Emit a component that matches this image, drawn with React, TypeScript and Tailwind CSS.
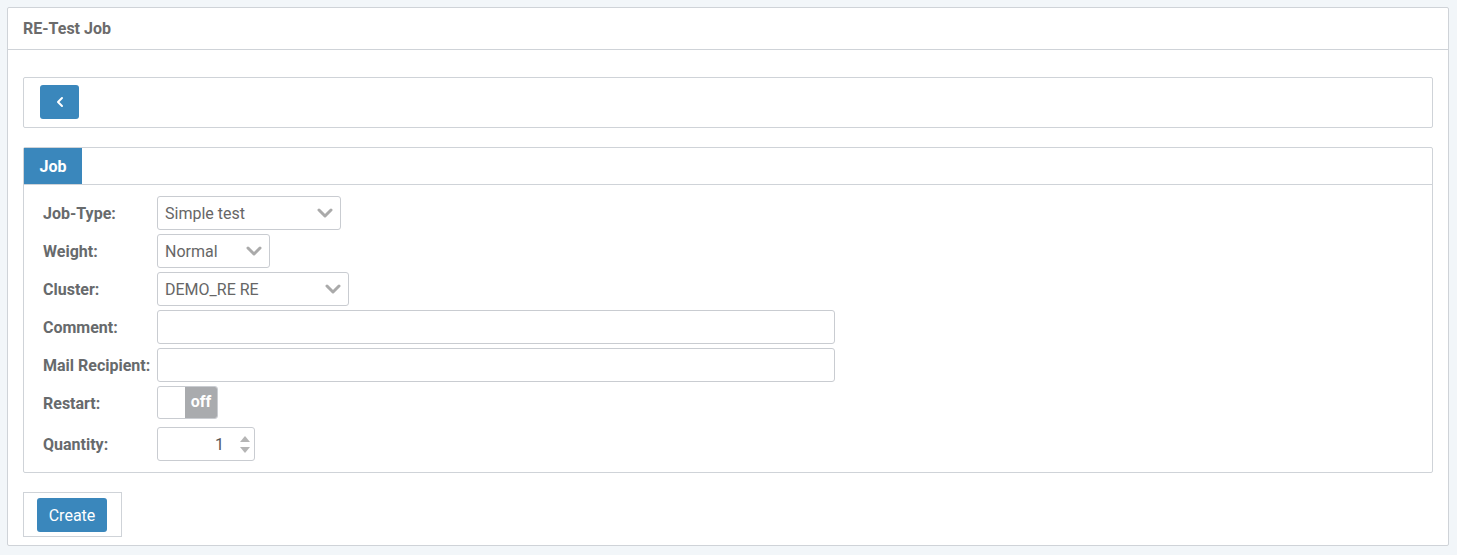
const labelCls = 'w-[114px] shrink-0 whitespace-nowrap pt-[2px] text-[16px] font-bold text-[#676a6c]'

const Chevron = () => (
  <svg width="16" height="10" viewBox="0 0 16 10" className="shrink-0">
    <polyline points="2,2 8,8 14,2" fill="none" stroke="#aaaaaa" strokeWidth="3" strokeLinecap="round" strokeLinejoin="round" />
  </svg>
)

const Select = ({ value, width }: { value: string; width: string }) => (
  <div
    className={`${width} flex h-[34px] items-center justify-between rounded-[3px] border border-[#c9ccd1] bg-white pl-[7px] pr-[7px] text-[16px] text-[#666]`}
  >
    <span className="pt-[2px]">{value}</span>
    <Chevron />
  </div>
)

const rows = [
  { label: 'Job-Type:', field: <Select value="Simple test" width="w-[184px]" /> },
  { label: 'Weight:', field: <Select value="Normal" width="w-[113px]" /> },
  { label: 'Cluster:', field: <Select value="DEMO_RE RE" width="w-[192px]" /> },
  { label: 'Comment:', field: <div className="h-[34px] w-[678px] rounded-[3px] border border-[#c9ccd1] bg-white" /> },
  { label: 'Mail Recipient:', field: <div className="h-[34px] w-[678px] rounded-[3px] border border-[#c9ccd1] bg-white" /> },
]

const App = () => {
  return (
    <div
      className="min-h-screen bg-[#f2f6f9] pl-[7px] pr-[8px] pt-[7px] pb-[8px]"
      style={{ fontFamily: 'Roboto, "Liberation Sans", sans-serif' }}
    >
      <div className="rounded-[2px] border border-[#cfd3d8] bg-white">
        {/* header */}
        <div className="flex h-[42px] items-center border-b border-[#cfd3d8] px-[15px] text-[16px] font-bold text-[#6b6b6b]">
          RE-Test Job
        </div>

        <div className="px-[15px] pt-[27px] pb-[8px]">
          {/* back bar */}
          <div className="rounded-[2px] border border-[#cfd3d8] px-[16px] pt-[7px] pb-[8px]">
            <button
              type="button"
              className="flex h-[34px] w-[39px] items-center justify-center rounded-[3px] bg-[#3a87bc]"
            >
              <svg width="8" height="12" viewBox="0 0 8 12">
                <polyline points="6,2 2,6 6,10" fill="none" stroke="white" strokeWidth="2" strokeLinecap="round" strokeLinejoin="round" />
              </svg>
            </button>
          </div>

          {/* job panel */}
          <div className="mt-[19px] rounded-[2px] border border-[#cfd3d8]">
            <div className="flex border-b border-[#cfd3d8]">
              <div className="flex h-[36px] w-[58px] items-center justify-center bg-[#3a87bc] pt-[1px] text-[16px] font-bold text-white">
                Job
              </div>
            </div>
            <div className="flex flex-col gap-[4px] pt-[11px] pb-[11px] pl-[19px]">
              {rows.map(({ label, field }) => (
                <div key={label} className="flex items-center">
                  <span className={labelCls}>{label}</span>
                  {field}
                </div>
              ))}
              <div className="flex items-center">
                <span className={labelCls}>Restart:</span>
                <div className="flex h-[33px] w-[61px] overflow-hidden rounded-[3px] border border-[#c9ccd1] bg-white">
                  <div className="w-[27px]" />
                  <div className="flex flex-1 items-center justify-center bg-[#a9abae] pb-[2px] text-[16px] font-bold text-white">
                    off
                  </div>
                </div>
              </div>
              <div className="mt-[4px] flex items-center">
                <span className={labelCls}>Quantity:</span>
                <div className="flex h-[34px] w-[98px] items-center justify-end rounded-[3px] border border-[#c9ccd1] bg-white pr-[4px] text-[16px] text-[#555]">
                  <span className="mr-[16px] pt-[2px]">1</span>
                  <div className="flex flex-col gap-[5px]">
                    <svg width="10" height="6" viewBox="0 0 10 6">
                      <polygon points="0,6 5,0 10,6" fill="#b5b5b5" />
                    </svg>
                    <svg width="10" height="6" viewBox="0 0 10 6">
                      <polygon points="0,0 10,0 5,6" fill="#b5b5b5" />
                    </svg>
                  </div>
                </div>
              </div>
            </div>
          </div>

          {/* create */}
          <div className="mt-[19px] w-[99px] border border-[#cfd3d8] pl-[13px] pt-[5px] pb-[4px]">
            <button
              type="button"
              className="h-[34px] w-[70px] rounded-[3px] bg-[#3a87bc] pt-[1px] text-[16px] text-white"
            >
              Create
            </button>
          </div>
        </div>
      </div>
    </div>
  )
}

export default App
